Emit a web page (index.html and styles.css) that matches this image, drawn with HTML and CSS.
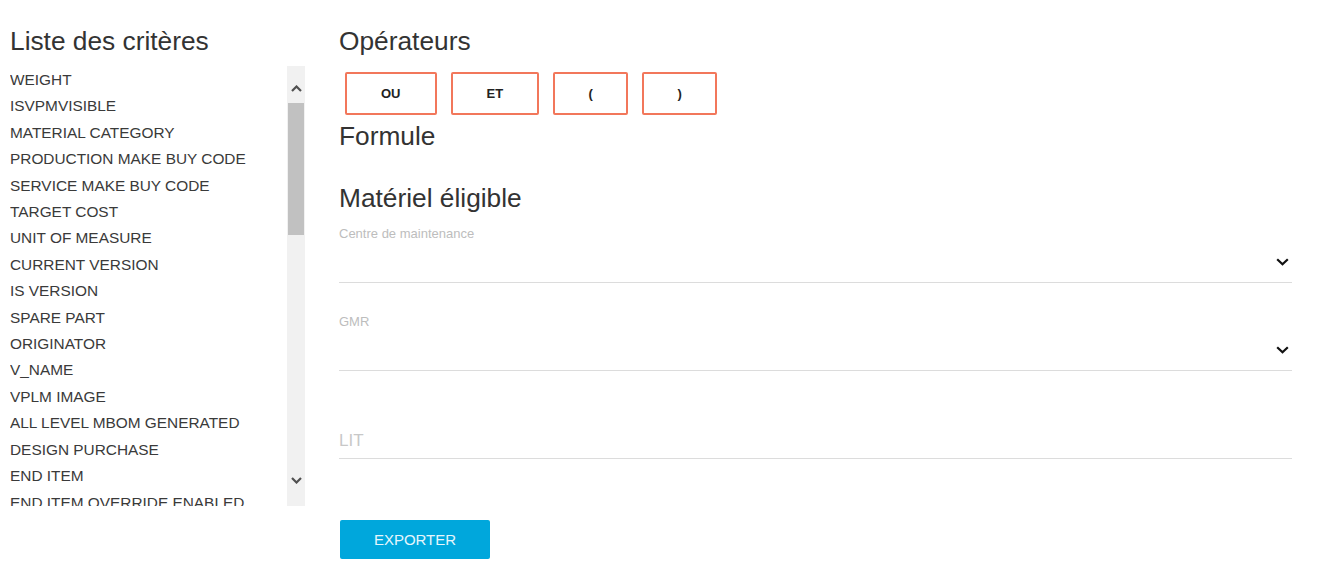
FILE: index.html
```html
<!DOCTYPE html>
<html lang="fr">
<head>
<meta charset="utf-8">
<title>Critères</title>
<link rel="stylesheet" href="styles.css">
</head>
<body>
<div class="page">
  <aside class="criteria">
    <h2 class="title">Liste des critères</h2>
    <div class="list-box">
      <ul class="list">
        <li>WEIGHT</li>
        <li>ISVPMVISIBLE</li>
        <li>MATERIAL CATEGORY</li>
        <li>PRODUCTION MAKE BUY CODE</li>
        <li>SERVICE MAKE BUY CODE</li>
        <li>TARGET COST</li>
        <li>UNIT OF MEASURE</li>
        <li>CURRENT VERSION</li>
        <li>IS VERSION</li>
        <li>SPARE PART</li>
        <li>ORIGINATOR</li>
        <li>V_NAME</li>
        <li>VPLM IMAGE</li>
        <li>ALL LEVEL MBOM GENERATED</li>
        <li>DESIGN PURCHASE</li>
        <li>END ITEM</li>
        <li>END ITEM OVERRIDE ENABLED</li>
      </ul>
      <div class="scrollbar">
        <div class="sb-btn sb-up">
          <svg width="11" height="7" viewBox="0 0 11 7"><path d="M1 6 L5.5 1.5 L10 6" fill="none" stroke="#505050" stroke-width="2.2"/></svg>
        </div>
        <div class="sb-thumb"></div>
        <div class="sb-space"></div>
        <div class="sb-btn sb-down">
          <svg width="11" height="7" viewBox="0 0 11 7"><path d="M1 1 L5.5 5.5 L10 1" fill="none" stroke="#505050" stroke-width="2.2"/></svg>
        </div>
      </div>
    </div>
  </aside>

  <main class="main">
    <h2 class="title">Opérateurs</h2>
    <div class="ops">
      <button class="op">OU</button>
      <button class="op">ET</button>
      <button class="op op-paren">(</button>
      <button class="op op-paren">)</button>
    </div>
    <h2 class="title title-formule">Formule</h2>
    <div class="formula"></div>
    <h2 class="title">Matériel éligible</h2>

    <div class="field">
      <div class="label">Centre de maintenance</div>
      <div class="select">
        <svg class="chev" width="13" height="8" viewBox="0 0 13 8"><path d="M1.2 1.2 L6.5 6.3 L11.8 1.2" fill="none" stroke="#111" stroke-width="2.2"/></svg>
      </div>
    </div>

    <div class="field">
      <div class="label">GMR</div>
      <div class="select">
        <svg class="chev" width="13" height="8" viewBox="0 0 13 8"><path d="M1.2 1.2 L6.5 6.3 L11.8 1.2" fill="none" stroke="#111" stroke-width="2.2"/></svg>
      </div>
    </div>

    <div class="field">
      <div class="label"></div>
      <div class="input"><span class="placeholder">LIT</span></div>
    </div>

    <button class="export">EXPORTER</button>
  </main>
</div>
</body>
</html>
```

FILE: styles.css
```css
* { box-sizing: border-box; }

body {
  margin: 0;
  background: #fff;
  font-family: "Liberation Sans", Arial, sans-serif;
  color: #333;
}

.page {
  display: flex;
  gap: 34px;
  padding-left: 10px;
}

.title {
  margin: 26px 0 0;
  font-size: 26.3px;
  line-height: 30px;
  font-weight: normal;
  color: #333;
}

/* left column */
.criteria {
  width: 295px;
  flex: none;
}

.list-box {
  margin-top: 10px;
  height: 440px;
  display: flex;
}

.list {
  flex: 1;
  margin: 0;
  padding: 1px 0 0;
  list-style: none;
  overflow: hidden;
}

.list li {
  font-size: 15.4px;
  line-height: 26.4px;
  color: #3a3a3a;
  white-space: nowrap;
}

.scrollbar {
  width: 18px;
  flex: none;
  background: #f1f1f1;
  display: flex;
  flex-direction: column;
}

.sb-btn {
  display: flex;
  justify-content: center;
}

.sb-up {
  height: 37px;
  padding-top: 19px;
}

.sb-up svg, .sb-down svg { display: block; }

.sb-thumb {
  height: 132px;
  background: #c1c1c1;
  margin: 0 1px;
}

.sb-space { flex: 1; }

.sb-down {
  height: 52px;
  align-items: center;
}

/* right column */
.main {
  width: 953px;
  flex: none;
}

.ops {
  display: flex;
  gap: 14px;
  padding-left: 6px;
  margin-top: 16px;
}

.op {
  height: 43px;
  padding: 0 34px;
  min-width: 75px;
  border: 2px solid #f2775b;
  border-radius: 2px;
  background: #fff;
  font-family: "Liberation Sans", Arial, sans-serif;
  font-weight: bold;
  font-size: 13px;
  color: #222;
}

.op-paren { padding: 0; width: 75px; }

.title-formule { margin-top: 6px; }

.formula { height: 6px; }

.field { margin-top: 13px; }
.field + .field { margin-top: 31px; }

.label {
  font-size: 13px;
  line-height: 16px;
  height: 16px;
  color: #bdbdbd;
}

.select {
  height: 41px;
  border-bottom: 1px solid #dcdcdc;
  display: flex;
  align-items: center;
  justify-content: flex-end;
  padding-right: 3px;
}

.chev { display: block; }

.input {
  height: 41px;
  border-bottom: 1px solid #dcdcdc;
  display: flex;
  align-items: center;
  padding-top: 6px;
}

.placeholder {
  font-size: 17px;
  color: #c8c8c8;
}

.export {
  margin-top: 61px;
  margin-left: 1px;
  width: 150px;
  height: 39px;
  border: none;
  border-radius: 2px;
  background: #00a7dc;
  color: #e6f6fc;
  font-family: "Liberation Sans", Arial, sans-serif;
  font-size: 15px;
  display: block;
}
```
